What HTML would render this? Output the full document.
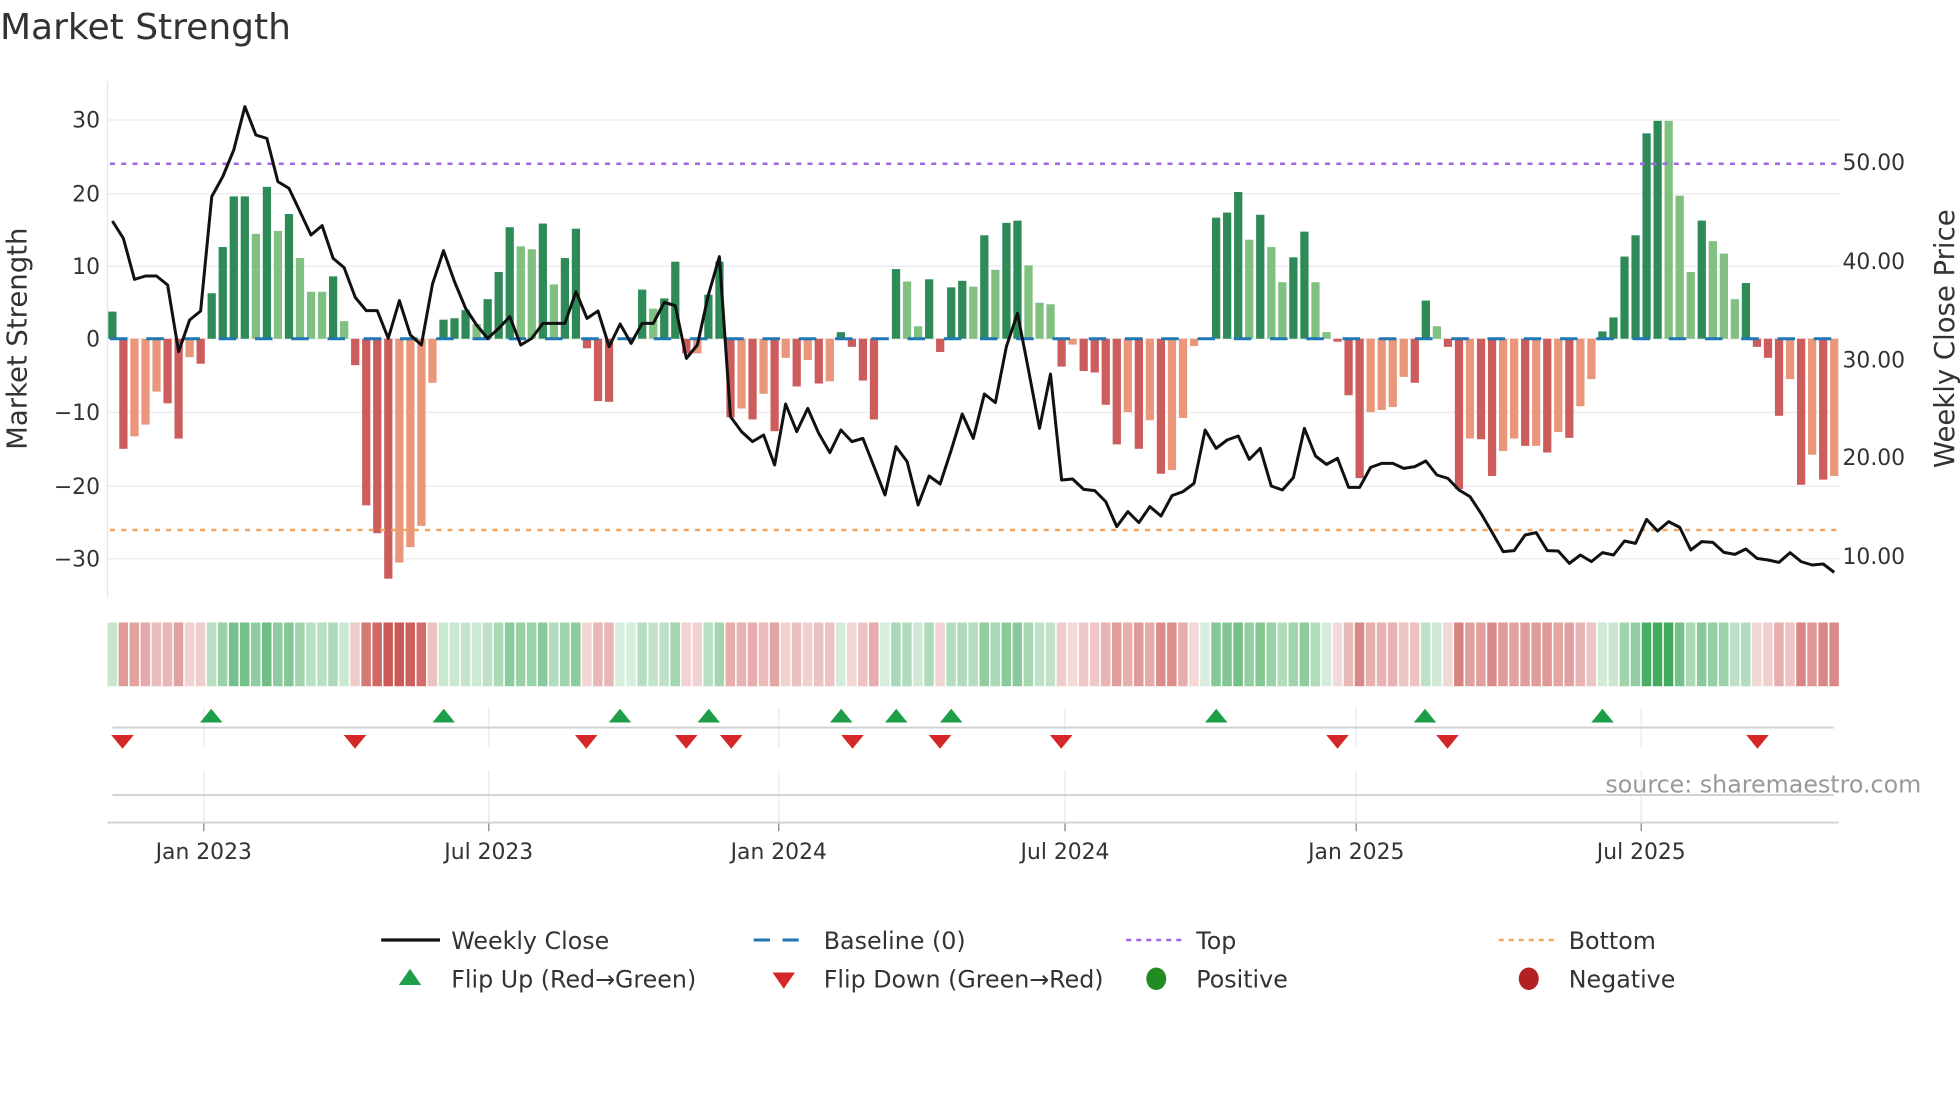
<!DOCTYPE html>
<html><head><meta charset="utf-8"><style>
html,body{margin:0;padding:0;background:#fff;width:1960px;height:1102px;overflow:hidden}
svg{display:block}
text{font-family:"DejaVu Sans","Liberation Sans",sans-serif;fill:#333}
</style></head><body>
<svg id="s" width="1960" height="1102" viewBox="0 0 1568 881.6" xmlns="http://www.w3.org/2000/svg">
<rect width="1568" height="882" fill="#fff"/>
<text x="0" y="31" font-size="28.8">Market Strength</text>
<g id="grid"></g>
<line x1="86" y1="65" x2="86" y2="478" stroke="#e6e6e6" stroke-width="1"/>
<g font-size="17.5" text-anchor="end">
<text x="80" y="102">30</text><text x="80" y="161">20</text><text x="80" y="219">10</text>
<text x="80" y="277">0</text><text x="80" y="336">−10</text><text x="80" y="395">−20</text><text x="80" y="453">−30</text>
</g>
<g font-size="17.5">
<text x="1474" y="136">50.00</text><text x="1474" y="215">40.00</text><text x="1474" y="294">30.00</text>
<text x="1474" y="372">20.00</text><text x="1474" y="451">10.00</text>
</g>
<text transform="translate(21,271) rotate(-90)" font-size="22" text-anchor="middle">Market Strength</text>
<text transform="translate(1563,271) rotate(-90)" font-size="22" text-anchor="middle">Weekly Close Price</text>
<g id="bars"></g>
<line x1="88" y1="271" x2="1470" y2="271" stroke="#1f77b4" stroke-width="2.4" stroke-dasharray="14,15"/>
<line x1="88" y1="131" x2="1470" y2="131" stroke="#a066e0" stroke-width="2" stroke-dasharray="4,5"/>
<line x1="88" y1="424" x2="1470" y2="424" stroke="#f4a460" stroke-width="2" stroke-dasharray="4,5"/>
<polyline id="price" fill="none" stroke="#111" stroke-width="2.4" stroke-linejoin="round"/>
<g id="heat"></g>
<g id="marks"></g>
<line x1="90" y1="582" x2="1467" y2="582" stroke="#d0d0d0" stroke-width="1.5"/>
<line x1="90" y1="636" x2="1467" y2="636" stroke="#d0d0d0" stroke-width="1.5"/>
<line x1="86" y1="658" x2="1471" y2="658" stroke="#d0d0d0" stroke-width="1.5"/>
<text x="1537" y="634" font-size="19" text-anchor="end" style="fill:#999">source: sharemaestro.com</text>
<g font-size="17.5" text-anchor="middle">
<text x="163" y="687">Jan 2023</text><text x="391" y="687">Jul 2023</text><text x="623" y="687">Jan 2024</text>
<text x="852" y="687">Jul 2024</text><text x="1085" y="687">Jan 2025</text><text x="1313" y="687">Jul 2025</text>
</g>
<g font-size="19">
<line x1="305" y1="752" x2="352" y2="752" stroke="#111" stroke-width="2.6"/>
<text x="361" y="759">Weekly Close</text>
<line x1="603" y1="752" x2="647" y2="752" stroke="#1f77b4" stroke-width="2.4" stroke-dasharray="13,10"/>
<text x="659" y="759">Baseline (0)</text>
<line x1="901" y1="752" x2="945" y2="752" stroke="#a066e0" stroke-width="2" stroke-dasharray="4,4"/>
<text x="957" y="759">Top</text>
<line x1="1199" y1="752" x2="1243" y2="752" stroke="#f4a460" stroke-width="2" stroke-dasharray="4,4"/>
<text x="1255" y="759">Bottom</text>
<polygon points="319,788 337,788 328,775" fill="#1f9e4a"/>
<text x="361" y="790">Flip Up (Red→Green)</text>
<polygon points="618,778 636,778 627,791" fill="#d62728"/>
<text x="659" y="790">Flip Down (Green→Red)</text>
<ellipse cx="925" cy="783" rx="8" ry="9" fill="#228b22"/>
<text x="957" y="790">Positive</text>
<ellipse cx="1223" cy="783" rx="8" ry="9" fill="#b22222"/>
<text x="1255" y="790">Negative</text>
</g>
</svg>
<script>
(function(){
var NS="http://www.w3.org/2000/svg";
function el(p,t,a){var e=document.createElementNS(NS,t);for(var k in a)e.setAttribute(k,a[k]);p.appendChild(e);return e;}
var v=[3.7,-15,-13.3,-11.7,-7.2,-8.8,-13.6,-2.5,-3.4,6.2,12.5,19.4,19.4,14.3,20.7,14.7,17,11,6.4,6.4,8.5,2.4,-3.6,-22.7,-26.5,-32.7,-30.5,-28.4,-25.5,-6,2.6,2.8,3.9,2,5.4,9.1,15.2,12.6,12.2,15.7,7.4,
11,15,-1.3,-8.5,-8.6,0,0,6.7,4.1,5.5,10.5,-2,-2,6,10.5,-10.7,-9.5,-11,-7.5,-12.6,-2.6,-6.5,-2.9,-6.1,-5.8,0.9,-1.1,-5.7,-11,0,9.5,7.8,1.7,8.1,-1.8,7,7.9,7.1,14.1,9.4,
15.8,16.1,10,4.9,4.7,-3.8,-0.8,-4.4,-4.6,-9,-14.4,-10,-15,-11.1,-18.4,-17.9,-10.8,-1,0,16.5,17.2,20,13.5,16.9,12.5,7.7,11.1,14.6,7.7,0.9,-0.4,-7.7,-19,-10,-9.7,-9.3,-5.2,-6,5.2,1.7,
-1.1,-20.5,-13.6,-13.7,-18.7,-15.3,-13.6,-14.6,-14.6,-15.5,-12.7,-13.5,-9.2,-5.5,1,2.9,11.2,14.1,28,29.7,29.7,19.5,9.1,16.1,13.3,11.6,5.4,7.6,-1.1,-2.6,-10.5,-5.5,-19.9,-15.8,-19.2,-18.7];
var c=("GRSSSRRSRGGGGgGgGgggGgRRRRSSSSGGGgGGGggGg"+"GGRRRGGGgGGRSGGRSRSRSRSRSGRRRGGggGRGGgGg"+"GGgggRSRRRRSRSRSSSGGGGgGggGGggRRRSSSSRGg"+"RRSRRSSRSRSRSSGGGGGGgggGgggGRRRSRSRS").split("");
var col={G:"#2e8b57",g:"#80c080",R:"#cd5c5c",S:"#e9967a"};
var py=[423,475,598,588,588,615,815,720,693,350,290,210,80,165,175,305,325,395,465,437,535,563,652,692,692,775,662,765,795,612,512,605,685,735,775,745,710,795,775,730,730,
730,635,715,693,800,732,790,730,730,667,677,835,795,645,530,1010,1055,1085,1065,1155,972,1055,985,1060,1118,1050,1085,1075,1160,1245,1100,1145,1275,1188,1212,1110,1002,1075,942,968,
800,700,870,1045,882,1200,1197,1228,1232,1265,1340,1295,1328,1280,1308,1247,1235,1210,1050,1105,1080,1068,1138,1105,1218,1230,1193,1045,1128,1153,1135,1222,1222,1162,1150,1150,1165,1160,1143,1185,
1195,1230,1250,1300,1357,1415,1412,1365,1358,1412,1413,1450,1425,1445,1418,1425,1383,1390,1318,1353,1325,1342,1410,1385,1387,1417,1423,1407,1435,1440,1447,1418,1445,1455,1452,1477];
var grid=document.getElementById("grid");
[96,155,213,271,330,389,447].forEach(function(y){el(grid,"line",{x1:86,y1:y,x2:1471,y2:y,stroke:"#eeeef2","stroke-width":1.2});});
[163,391,623,852,1085,1313].forEach(function(x){
 el(grid,"line",{x1:x,y1:566,x2:x,y2:598,stroke:"#e8eaf0","stroke-width":1});
 el(grid,"line",{x1:x,y1:616,x2:x,y2:658,stroke:"#e8eaf0","stroke-width":1});
 el(grid,"line",{x1:x,y1:658,x2:x,y2:665,stroke:"#999","stroke-width":1.2});
});
var bars=document.getElementById("bars"),heat=document.getElementById("heat");
var pts=[];
function mix(a,t){return "rgb("+a.map(function(q){return Math.round(255+(q-255)*t);}).join(",")+")";}
for(var i=0;i<v.length;i++){
 var x=89.9+i*8.83,val=v[i],h=Math.abs(val)*5.87;
 var y=val>=0?271-h:271;
 if(h>0.3) el(bars,"rect",{x:(x-3.3).toFixed(2),y:y.toFixed(2),width:6.6,height:h.toFixed(2),fill:col[c[i]]||"#888"});
 var t=0.2+0.75*Math.min(Math.abs(val)/30,1);
 var f=val>=0?mix([55,165,85],t):mix([200,80,78],t);
 el(heat,"rect",{x:(x-3.9).toFixed(2),y:498,width:7.6,height:51,fill:f});
 if(i<py.length) pts.push(x.toFixed(1)+","+(64+py[i]/3.75).toFixed(1));
}
document.getElementById("price").setAttribute("points",pts.join(" "));
var m=document.getElementById("marks");
[169,355,496,567,673,717,761,973,1140,1282].forEach(function(x){el(m,"polygon",{points:(x-9)+",578 "+(x+9)+",578 "+x+",567",fill:"#1f9e4a"});});
[98,284,469,549,585,682,752,849,1070,1158,1406].forEach(function(x){el(m,"polygon",{points:(x-9)+",588 "+(x+9)+",588 "+x+",599",fill:"#d62728"});});
})();
</script>
</body></html>
